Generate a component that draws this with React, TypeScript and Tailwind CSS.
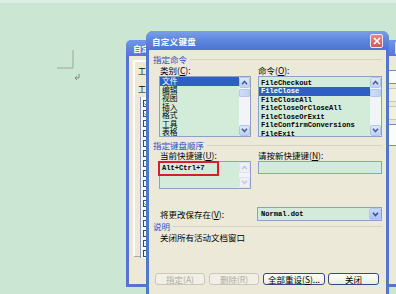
import React from "react";

const CJK = "font-['Noto_Sans_CJK_SC','Noto_Sans',sans-serif]";
const MONO = "font-['Liberation_Mono','DejaVu_Sans_Mono',monospace]";

function Chevron({ up, color = "#3b5a9a" }: { up?: boolean; color?: string }) {
  return (
    <svg width="7" height="5" viewBox="0 0 7 5">
      <path
        d={up ? "M1 4.2 L3.5 1.4 L6 4.2" : "M1 0.8 L3.5 3.6 L6 0.8"}
        fill="none"
        stroke={color}
        strokeWidth="1.5"
      />
    </svg>
  );
}

function ArrowBtn({ up, disabled }: { up?: boolean; disabled?: boolean }) {
  return (
    <div
      className={
        disabled
          ? "h-[11px] flex items-center justify-center rounded-[2px] bg-[#eef0f5] border border-[#dde2ee]"
          : "h-[11px] flex items-center justify-center rounded-[2px] bg-gradient-to-b from-[#dfe8fb] to-[#bccff3] border border-[#b2c4ea]"
      }
    >
      <Chevron up={up} color={disabled ? "#c3c8d6" : "#4a5f8f"} />
    </div>
  );
}

function ScrollBar({ thumb, disabled }: { thumb?: boolean; disabled?: boolean }) {
  return (
    <div className="w-[11px] flex flex-col bg-[#f3f4f8]">
      <ArrowBtn up disabled={disabled} />
      <div className="flex-1 flex flex-col">
        {thumb && (
          <div className="mt-[1px] h-[8px] rounded-[1px] bg-gradient-to-r from-[#cfdcf7] to-[#c0d1f3] border border-[#b7c8ee]" />
        )}
      </div>
      <ArrowBtn disabled={disabled} />
    </div>
  );
}

function Header({ text, className }: { text: string; className?: string }) {
  return (
    <div className={"flex items-center h-[10px] " + (className ?? "")}>
      <span className={`${CJK} text-[8.5px] leading-[10px] text-[#2453c2] whitespace-nowrap`}>{text}</span>
      <div className="flex-1 h-px bg-[#d6d3c3] ml-[3px]" />
    </div>
  );
}

function CloseBtn() {
  return (
    <div className="w-[13px] h-[14px] rounded-[2px] border border-[#f4e6e6] bg-gradient-to-b from-[#e48a86] to-[#cc5a55] flex items-center justify-center">
      <svg width="8" height="8" viewBox="0 0 8 8">
        <path d="M1 1 L7 7 M7 1 L1 7" stroke="#ffffff" strokeWidth="1.6" />
      </svg>
    </div>
  );
}

function Button({ children, disabled, w }: { children: React.ReactNode; disabled?: boolean; w: string }) {
  return (
    <div
      className={
        (disabled
          ? "border-[#c9c7ba] text-[#aeaca0] bg-[#f1efe6] "
          : "border-[#34488a] text-black bg-gradient-to-b from-[#ffffff] to-[#ecebe4] ") +
        `${w} h-[12px] rounded-[3px] border flex items-center justify-center ${CJK} text-[8.5px] leading-[10px] whitespace-nowrap`
      }
    >
      {children}
    </div>
  );
}

const categories = ["文件", "编辑", "视图", "插入", "格式", "工具", "表格"];
const commands = [
  "FileCheckout",
  "FileClose",
  "FileCloseAll",
  "FileCloseOrCloseAll",
  "FileCloseOrExit",
  "FileConfirmConversions",
  "FileExit",
];

function BackDialog() {
  const rows = Array.from({ length: 16 });
  const checked = [0, 1, 10];
  return (
    <div className="absolute left-[126px] top-[40px] w-[292px] h-[247px] rounded-t-[6px] bg-[#5474cf] px-[3px] pb-[3px] flex flex-col">
      <div className="h-[16px] flex items-center justify-between bg-gradient-to-b from-[#7097e6] to-[#4f78d6] rounded-t-[5px] -mx-[3px] pl-[7px] pr-[10px]">
        <span className={`${CJK} text-[8.5px] font-bold text-white leading-[10px]`}>自定义</span>
        <CloseBtn />
      </div>
      <div className="flex-1 bg-[#ece9d8] flex pl-[4px] pt-[4px]">
        <div className="w-[250px] h-[197px] border-l-2 border-t-2 border-l-[#ffffff] border-t-[#ffffff] border-b border-b-[#a9a797] flex flex-col pl-[3px] pt-[4px]">
          <div className={`${CJK} text-[8px] leading-[10px] text-black`}>工具栏(B):</div>
          <div className={`${CJK} text-[8px] leading-[10px] text-black mt-[8px]`}>工具栏</div>
          <div className="mt-[3px] ml-[2px] flex-1 bg-[#ffffff] border-l border-[#7f9db9] flex flex-col pl-[2px] pt-[1px]">
            {rows.map((_, i) => (
              <div key={i} className="h-[10px] flex items-center">
                <div className="w-[6px] h-[7px] border border-[#1c5180] bg-[#f4f4f0] flex items-center justify-center">
                  {checked.includes(i) && (
                    <svg width="5" height="5" viewBox="0 0 5 5">
                      <path d="M0.5 2.5 L2 4 L4.5 0.8" fill="none" stroke="#21a121" strokeWidth="1.2" />
                    </svg>
                  )}
                </div>
              </div>
            ))}
          </div>
        </div>
        <div className="ml-[8px] flex flex-col gap-[4px] mt-[10px]">
          <div className="w-[30px] h-[14px] rounded-[3px] border border-[#7a8aa8] bg-[#fbfbf8]" />
          <div className="w-[30px] h-[14px] rounded-[3px] border border-[#c9c7ba] bg-[#f1efe6]" />
          <div className="w-[30px] h-[14px] rounded-[3px] border border-[#c9c7ba] bg-[#f1efe6]" />
          <div className="w-[30px] h-[22px] rounded-[3px] border border-[#7a8aa8] bg-[#fbfbf8]" />
        </div>
      </div>
    </div>
  );
}

function FrontDialog() {
  return (
    <div className="absolute left-[146px] top-[31px] w-[243px] h-[275px] rounded-t-[7px] bg-[#5374cf] px-[3px] flex flex-col">
      <div className="h-[19px] -mx-[3px] px-[6px] rounded-t-[7px] bg-gradient-to-b from-[#7aa0ea] via-[#5d86dc] to-[#4c74d2] flex items-center justify-between">
        <span className={`${CJK} text-[8.5px] font-bold text-white leading-[10px] tracking-[0.3px]`}>自定义键盘</span>
        <CloseBtn />
      </div>
      <div className="flex-1 bg-[#ece9d8] pl-[4px] pr-[4px] flex flex-col text-black">
        <Header text="指定命令" className="mt-[4px]" />
        <div className="flex ml-[6px] gap-[7px] mt-[1px]">
          <div className="w-[92px] flex flex-col">
            <div className={`${CJK} h-[11px] pl-[1px] text-[8.5px] leading-[10px] whitespace-nowrap`}>
              类别(<span className="underline">C</span>):
            </div>
            <div className="h-[61px] border border-[#8aa3c2] bg-[#d3ecd9] flex">
              <div className="flex-1 flex flex-col">
                {categories.map((c, i) => (
                  <div
                    key={c}
                    className={
                      (i === 0 ? "bg-[#2f5fc4] text-white " : "text-black ") +
                      `${CJK} h-[8.5px] pl-[2px] text-[7.8px] leading-[8.5px]`
                    }
                  >
                    {c}
                  </div>
                ))}
              </div>
              <ScrollBar thumb />
            </div>
          </div>
          <div className="w-[124px] flex flex-col">
            <div className={`${CJK} h-[11px] text-[8.5px] leading-[10px] whitespace-nowrap`}>
              命令(<span className="underline">O</span>):
            </div>
            <div className="h-[61px] border border-[#8aa3c2] bg-[#d3ecd9] flex">
              <div className="flex-1 flex flex-col pt-[1.5px]">
                {commands.map((c, i) => (
                  <div
                    key={c}
                    className={
                      (i === 1 ? "bg-[#2f5fc4] text-white " : "text-black ") +
                      `${MONO} h-[8.5px] pl-[2px] text-[7.1px] leading-[8.5px] font-bold whitespace-nowrap`
                    }
                  >
                    {c}
                  </div>
                ))}
              </div>
              <ScrollBar thumb />
            </div>
          </div>
        </div>

        <Header text="指定键盘顺序" className="mt-[3px]" />
        <div className="flex ml-[6px] gap-[7px]">
          <div className="w-[92px] flex flex-col">
            <div className={`${CJK} h-[11px] pl-[1px] text-[8.5px] leading-[10px] whitespace-nowrap`}>
              当前快捷键(<span className="underline">U</span>):
            </div>
            <div className="relative h-[28px] border border-[#8aa3c2] bg-[#d3ecd9] flex">
              <div className={`${MONO} flex-1 pl-[2px] pt-[2px] text-[7.1px] leading-[9px] font-bold`}>Alt+Ctrl+7</div>
              <ScrollBar disabled />
              <div className="absolute -left-[2px] -top-[1px] w-[61px] h-[15px] border-2 border-[#d4202a]" />
            </div>
          </div>
          <div className="w-[124px] flex flex-col">
            <div className={`${CJK} h-[11px] text-[8.5px] leading-[10px] whitespace-nowrap`}>
              请按新快捷键(<span className="underline">N</span>):
            </div>
            <div className="h-[13px] border border-[#8aa3c2] bg-[#d3ecd9]" />
          </div>
        </div>

        <div className="flex items-center ml-[7px] mt-[18px] h-[14px]">
          <div className={`${CJK} w-[97px] text-[8.5px] leading-[10px] whitespace-nowrap`}>
            将更改保存在(<span className="underline">V</span>):
          </div>
          <div className="w-[125px] h-[14px] border border-[#8aa3c2] bg-[#d3ecd9] flex items-center">
            <div className={`${MONO} flex-1 pl-[3px] text-[7.1px] leading-[9px] font-bold`}>Normal.dot</div>
            <div className="w-[12px] h-[12px] rounded-[2px] bg-gradient-to-b from-[#c9d8f8] to-[#a9c0f0] border border-[#b6c8ee] flex items-center justify-center">
              <Chevron color="#3a5090" />
            </div>
          </div>
        </div>

        <Header text="说明" />
        <div className={`${CJK} ml-[7px] mt-[1px] h-[10px] text-[8.5px] leading-[10px] whitespace-nowrap`}>
          关闭所有活动文档窗口
        </div>

        <div className="flex ml-[2px] mt-[31px] gap-[4px]">
          <Button disabled w="w-[50px]">
            指定(A)
          </Button>
          <Button disabled w="w-[50px]">
            删除(R)
          </Button>
          <Button w="w-[62px]">
            全部重设(<span className="underline">S</span>)...
          </Button>
          <div className="-ml-[1px]">
            <Button w="w-[51px]">关闭</Button>
          </div>
        </div>
      </div>
    </div>
  );
}

export default function App() {
  return (
    <div className="relative w-[396px] h-[294px] overflow-hidden bg-[#cbe6d2]">
      <div className="h-[3px] bg-[#dcefe2]" />
      <svg className="absolute left-[56px] top-[49px]" width="28" height="34" viewBox="0 0 28 34">
        <path d="M17 1 V19 H1" fill="none" stroke="#9aa79f" strokeWidth="1" />
        <path d="M23 25 V29 H19 M21 27 L19 29 L21 31" fill="none" stroke="#7a857e" strokeWidth="0.9" />
      </svg>
      <BackDialog />
      <FrontDialog />
    </div>
  );
}
